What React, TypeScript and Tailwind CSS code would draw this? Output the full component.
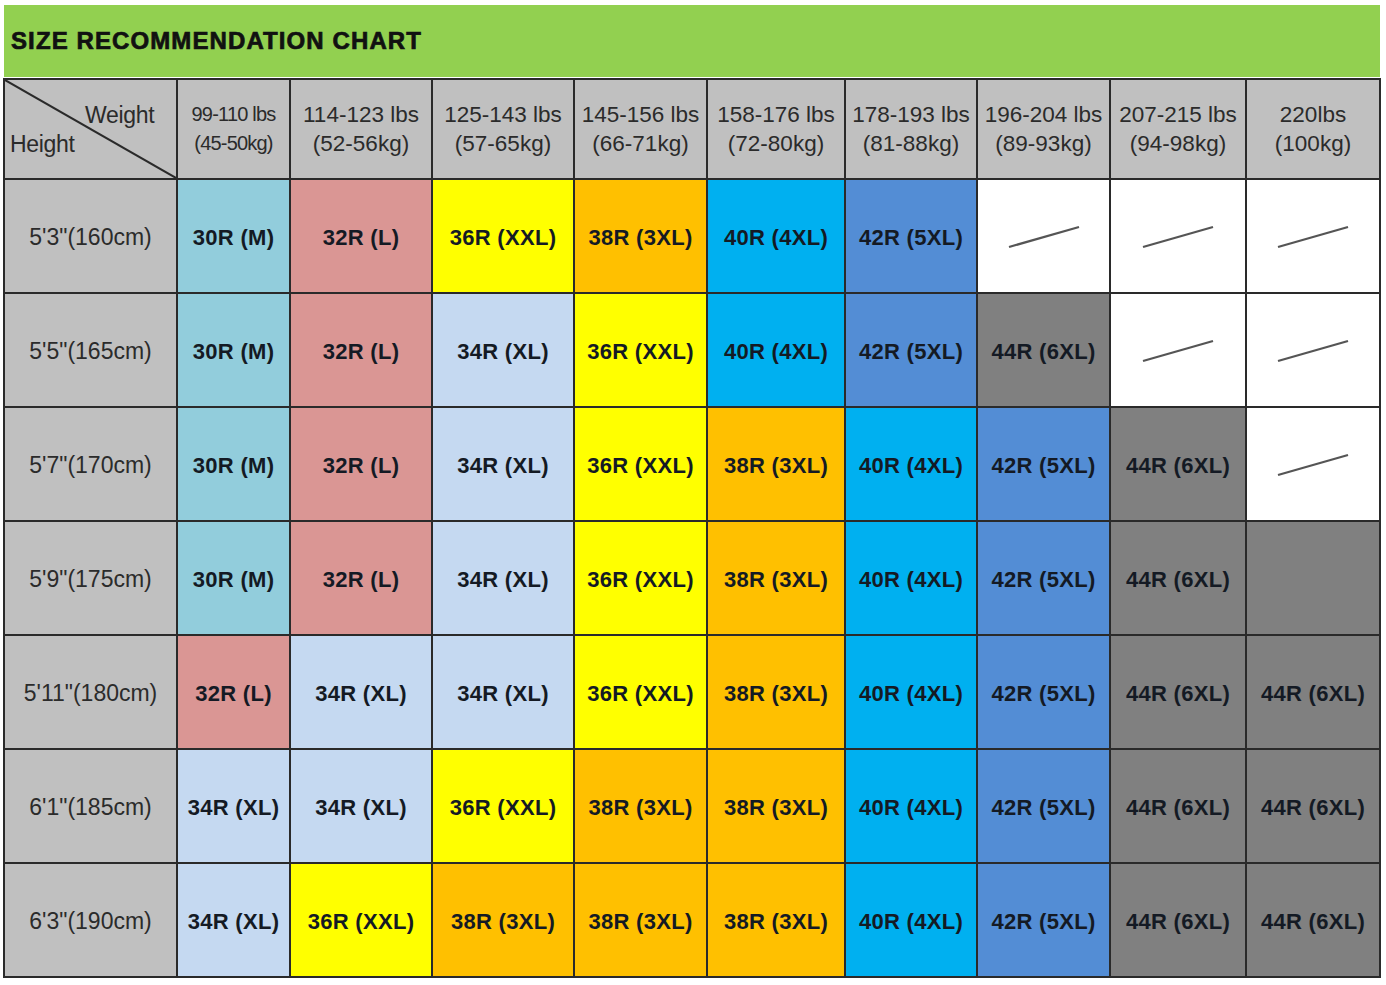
import React from "react";

type C = "lb" | "pk" | "xl" | "ye" | "or" | "cy" | "bl" | "gr" | "wh";

const bg: Record<C, string> = {
  lb: "bg-[#92cddc]",
  pk: "bg-[#da9694]",
  xl: "bg-[#c5d9f1]",
  ye: "bg-[#ffff00]",
  or: "bg-[#ffc000]",
  cy: "bg-[#00b0f0]",
  bl: "bg-[#538dd5]",
  gr: "bg-[#808080]",
  wh: "bg-white",
};

const S: Record<string, [string, C]> = {
  M: ["30R (M)", "lb"],
  L: ["32R (L)", "pk"],
  XL: ["34R (XL)", "xl"],
  XXL: ["36R (XXL)", "ye"],
  "3": ["38R (3XL)", "or"],
  "4": ["40R (4XL)", "cy"],
  "5": ["42R (5XL)", "bl"],
  "6": ["44R (6XL)", "gr"],
  "/": ["/", "wh"],
  G: ["", "gr"],
};

const rows: [string, string[]][] = [
  ["5'3\"(160cm)", ["M", "L", "XXL", "3", "4", "5", "/", "/", "/"]],
  ["5'5\"(165cm)", ["M", "L", "XL", "XXL", "4", "5", "6", "/", "/"]],
  ["5'7\"(170cm)", ["M", "L", "XL", "XXL", "3", "4", "5", "6", "/"]],
  ["5'9\"(175cm)", ["M", "L", "XL", "XXL", "3", "4", "5", "6", "G"]],
  ["5'11\"(180cm)", ["L", "XL", "XL", "XXL", "3", "4", "5", "6", "6"]],
  ["6'1\"(185cm)", ["XL", "XL", "XXL", "3", "3", "4", "5", "6", "6"]],
  ["6'3\"(190cm)", ["XL", "XXL", "3", "3", "3", "4", "5", "6", "6"]],
];

const heads: [string, string][] = [
  ["114-123 lbs", "(52-56kg)"],
  ["125-143 lbs", "(57-65kg)"],
  ["145-156 lbs", "(66-71kg)"],
  ["158-176 lbs", "(72-80kg)"],
  ["178-193 lbs", "(81-88kg)"],
  ["196-204 lbs", "(89-93kg)"],
  ["207-215 lbs", "(94-98kg)"],
  ["220lbs", "(100kg)"],
];

export default function App() {
  return (
    <div
      className="w-[1386px] h-[985px] bg-white pt-[5px] pl-[3px]"
      style={{ fontFamily: '"Liberation Sans", Arial, sans-serif' }}
    >
      <div className="ml-[1px] w-[1376px] h-[72px] bg-[#92d050] flex items-center pl-[7px]">
        <span className="text-[24px] font-bold text-[#111] tracking-[1.1px] [-webkit-text-stroke:0.7px_#111]">
          SIZE RECOMMENDATION CHART
        </span>
      </div>
      <div className="mt-[1px] w-[1378px] grid grid-cols-[171px_111px_140px_140px_131px_136px_130px_131px_134px_132px] grid-rows-[98px_repeat(7,112px)] gap-[2px] p-[2px] bg-[#2a2a2a]">
        <div className="relative bg-[#c0c0c0] text-[#2b2b2b] text-[23px]">
          <svg className="absolute inset-0" width="171" height="98" viewBox="0 0 171 98">
            <line x1="0" y1="0" x2="171" y2="98" stroke="#2a2a2a" strokeWidth="2" />
          </svg>
          <span className="absolute left-[80px] top-[18px] tracking-[-0.3px]">Weight</span>
          <span className="absolute left-[5px] top-[47px] tracking-[-0.3px]">Height</span>
        </div>
        <div className="bg-[#c0c0c0] text-[#2b2b2b] flex flex-col items-center justify-center leading-[29px] text-[20px] tracking-[-0.8px]">
          <span>99-110 lbs</span>
          <span>(45-50kg)</span>
        </div>
        {heads.map(([a, b]) => (
          <div
            key={a}
            className="bg-[#c0c0c0] text-[#2b2b2b] flex flex-col items-center justify-center leading-[29px] text-[22.5px]"
          >
            <span>{a}</span>
            <span>{b}</span>
          </div>
        ))}
        {rows.map(([label, cells]) => (
          <React.Fragment key={label}>
            <div className="bg-[#c0c0c0] text-[#2b2b2b] text-[23px] flex items-center justify-center pt-[2px]">
              {label}
            </div>
            {cells.map((k, i) => {
              const [t, c] = S[k];
              return (
                <div key={i} className={`${bg[c]} flex items-center justify-center pt-[2px]`}>
                  {t === "/" ? (
                    <svg width="72" height="24" viewBox="0 0 72 24">
                      <line x1="1" y1="22" x2="71" y2="2" stroke="#555" strokeWidth="2.2" />
                    </svg>
                  ) : (
                    <span className="text-[22px] font-bold text-[#141a24] tracking-[0.3px]">{t}</span>
                  )}
                </div>
              );
            })}
          </React.Fragment>
        ))}
      </div>
    </div>
  );
}
